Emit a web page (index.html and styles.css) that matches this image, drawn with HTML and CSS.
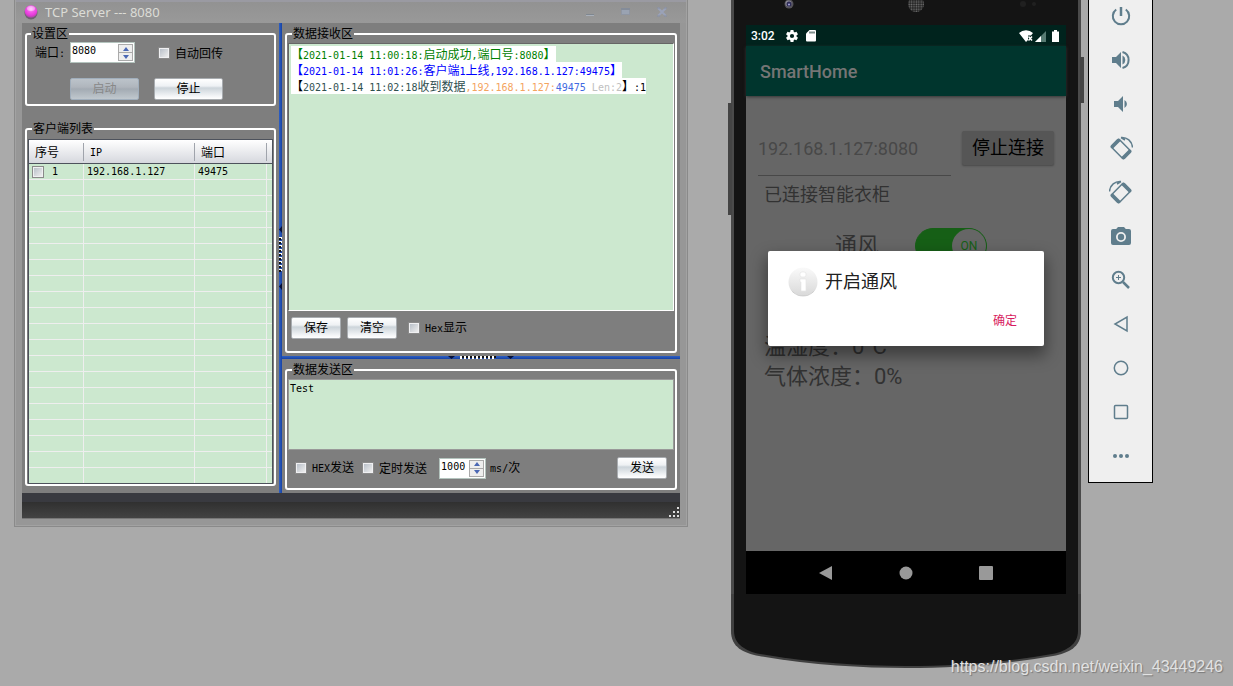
FILE: index.html
```html
<!DOCTYPE html>
<html lang="zh-CN">
<head>
<meta charset="utf-8">
<title>TCP Server --- 8080</title>
<link rel="stylesheet" href="styles.css">
</head>
<body>
<main class="desktop">
  <section class="window">
    <header class="titlebar">
      <svg class="orb" width="14" height="16" viewBox="0 0 14 16"><defs><radialGradient id="orb" cx=".5" cy=".3" r=".7"><stop offset="0" stop-color="#ffb8f8"/><stop offset=".35" stop-color="#f45bea"/><stop offset=".7" stop-color="#e83bdc"/><stop offset="1" stop-color="#a34b9e"/></radialGradient></defs><ellipse cx="7" cy="9" rx="6.500" ry="6.500" fill="#6d6070"/><circle cx="7" cy="7.500" r="6.200" fill="url(#orb)"/><ellipse cx="7" cy="4.500" rx="4" ry="2.500" fill="#ffe4fd" opacity=".5"/></svg>
      <h1 class="title">TCP Server --- 8080</h1>
      <div class="winbtns">
        <button type="button" aria-label="最小化"><svg width="12" height="12"><path d="M2 8.500h8" stroke="#7f8790" stroke-width="1"/><path d="M2 9.500h8" stroke="#a9b0ba"/></svg></button>
        <button type="button" aria-label="最大化"><svg width="12" height="12"><rect x="1.500" y="2.500" width="8" height="6" fill="#9aa3b2" stroke="#8f96a3"/><path d="M1 3h9" stroke="#848c99" stroke-width="2"/></svg></button>
        <button type="button" aria-label="关闭"><svg width="12" height="12"><path d="M2 2l8 8M10 2l-8 8" stroke="#9aa2b8" stroke-width="2"/><path d="M1 2h3M8 2h3M1 10h3M8 10h3" stroke="#868ea2"/></svg></button>
      </div>
    </header>

    <div class="client">
      <div class="left">
        <fieldset class="group settings">
          <legend>设置区</legend>
          <div class="row">
            <label for="port">端口<span class="m">:</span></label>
            <span class="spin"><input id="port" class="m" value="8080">
              <span class="arrows"><button type="button" aria-label="增加"><svg width="6" height="4"><path d="M0 4L3 0l3 4z"/></svg></button><button type="button" aria-label="减少"><svg width="6" height="4"><path d="M0 0l3 4 3-4z"/></svg></button></span></span>
            <label class="check auto"><input type="checkbox">自动回传</label>
          </div>
          <div class="row actions">
            <button class="btn wide" type="button" disabled>启动</button>
            <button class="btn wide" type="button">停止</button>
          </div>
        </fieldset>
        <fieldset class="group clients">
          <legend>客户端列表</legend>
          <table class="grid">
            <colgroup><col class="c1"><col class="c2"><col class="c3"><col class="c4"></colgroup>
            <thead><tr><th>序号</th><th><span class="m">IP</span></th><th>端口</th><th></th></tr></thead>
            <tbody class="m">
              <tr><td><label class="num"><input type="checkbox">1</label></td><td>192.168.1.127</td><td>49475</td><td></td></tr>
              <tr><td></td><td></td><td></td><td></td></tr><tr><td></td><td></td><td></td><td></td></tr>
              <tr><td></td><td></td><td></td><td></td></tr><tr><td></td><td></td><td></td><td></td></tr>
              <tr><td></td><td></td><td></td><td></td></tr><tr><td></td><td></td><td></td><td></td></tr>
              <tr><td></td><td></td><td></td><td></td></tr><tr><td></td><td></td><td></td><td></td></tr>
              <tr><td></td><td></td><td></td><td></td></tr><tr><td></td><td></td><td></td><td></td></tr>
              <tr><td></td><td></td><td></td><td></td></tr><tr><td></td><td></td><td></td><td></td></tr>
              <tr><td></td><td></td><td></td><td></td></tr><tr><td></td><td></td><td></td><td></td></tr>
              <tr><td></td><td></td><td></td><td></td></tr><tr><td></td><td></td><td></td><td></td></tr>
              <tr><td></td><td></td><td></td><td></td></tr><tr><td></td><td></td><td></td><td></td></tr>
              <tr><td></td><td></td><td></td><td></td></tr>
            </tbody>
          </table>
        </fieldset>
      </div>

      <div class="vsplit"><svg width="3" height="64" viewBox="0 0 3 64"><path d="M3 0v7L0 3.500zM3 57v7L0 60.500z" fill="#05103a"/><path d="M1.500 11v36" stroke="#fff" stroke-width="3" stroke-dasharray="2 2"/><path d="M1 12v36" stroke="#111" stroke-width="2" stroke-dasharray="2 2"/></svg></div>

      <div class="right">
        <fieldset class="group receive">
          <legend>数据接收区</legend>
          <div class="log">
            <p class="ok">【<span class="m">2021-01-14 11:00:18:</span>启动成功<span class="m">,</span>端口号<span class="m">:8080</span>】</p>
            <p class="on">【<span class="m">2021-01-14 11:01:26:</span>客户端<span class="m">1</span>上线<span class="m">,192.168.1.127:49475</span>】</p>
            <p>【<span class="slate"><span class="m">2021-01-14 11:02:18</span>收到数据</span><span class="m"><span class="ip">,192.168.1.127:</span><span class="pt">49475</span><span class="len"> Len:2</span></span>】<span class="m">:1</span></p>
          </div>
          <div class="row tools">
            <button class="btn" type="button">保存</button>
            <button class="btn" type="button">清空</button>
            <label class="check"><input type="checkbox"><span><span class="m">Hex</span>显示</span></label>
          </div>
        </fieldset>
        <div class="hsplit"><svg width="66" height="3" viewBox="0 0 66 3"><path d="M0 0h7L3.500 3zM59 0h7L62.500 3z" fill="#05103a"/><path d="M12 1.500h36" stroke="#fff" stroke-width="3" stroke-dasharray="2 2"/><path d="M14 1h36" stroke="#111" stroke-width="2" stroke-dasharray="2 2"/></svg></div>
        <fieldset class="group send">
          <legend>数据发送区</legend>
          <textarea class="m" aria-label="数据发送区">Test</textarea>
          <div class="row tools2">
            <label class="check"><input type="checkbox"><span><span class="m">HEX</span>发送</span></label>
            <label class="check"><input type="checkbox">定时发送</label>
            <span class="spin small"><input id="ms" class="m" value="1000">
              <span class="arrows"><button type="button" aria-label="增加"><svg width="6" height="4"><path d="M0 4L3 0l3 4z"/></svg></button><button type="button" aria-label="减少"><svg width="6" height="4"><path d="M0 0l3 4 3-4z"/></svg></button></span></span>
            <label for="ms"><span class="m">ms/</span>次</label>
            <button class="btn submit" type="button">发送</button>
          </div>
        </fieldset>
      </div>
    </div>
    <footer class="statusbar"><svg width="11" height="11" viewBox="0 0 11 11" fill="#ddd"><path d="M8 0h2v2H8zM4 4h2v2H4zM8 4h2v2H8zM0 8h2v2H0zM4 8h2v2H4zM8 8h2v2H8z"/></svg></footer>
  </section>

  <section class="phone">
    <i class="key key-l"></i><i class="key key-r"></i>
    <div class="bezel">
      <div class="forehead">
        <svg class="cam" width="10" height="10" viewBox="0 0 10 10"><circle cx="5" cy="4" r="4.500" fill="#55535a"/><circle cx="4.500" cy="3.500" r="3" fill="#8d8b96"/><circle cx="5" cy="4" r="2.500" fill="#2c2a55"/><circle cx="5" cy="4.500" r="1" fill="#a9a9dc"/></svg>
        <svg class="speaker" width="16" height="16" viewBox="0 0 16 16"><defs><pattern id="mesh" width="2.400" height="2.400" patternUnits="userSpaceOnUse"><circle cx="1.200" cy="1.200" r=".8" fill="#777"/></pattern></defs><circle cx="8" cy="8" r="8" fill="#222"/><circle cx="8" cy="8" r="8" fill="url(#mesh)"/></svg>
        <svg class="sensor" width="18" height="8"><circle cx="4" cy="4" r="3" fill="#202020"/><circle cx="15" cy="4" r="2" fill="#202020"/></svg>
      </div>
      <div class="screen">
        <div class="status">
          <span class="clock">3:02</span>
          <svg width="12" height="12" viewBox="2 2 20 20" fill="#fff"><path d="M19.430 12.980c.04-.32.070-.64.070-.98s-.03-.66-.07-.98l2.110-1.650c.19-.15.240-.42.120-.64l-2-3.460c-.12-.22-.39-.3-.61-.22l-2.490 1c-.52-.4-1.080-.73-1.690-.98l-.38-2.650A.49.490 0 0 0 14 2h-4c-.25 0-.46.180-.49.420l-.38 2.650c-.61.250-1.170.59-1.690.98l-2.490-1c-.23-.09-.49 0-.61.220l-2 3.460c-.13.220-.07.490.12.640l2.110 1.650c-.04.320-.07.650-.07.980s.03.660.07.980l-2.110 1.650c-.19.150-.24.420-.12.640l2 3.460c.12.220.39.300.61.220l2.490-1c.52.400 1.080.730 1.690.980l.38 2.650c.03.240.24.420.49.420h4c.25 0 .46-.18.490-.42l.38-2.650c.61-.25 1.170-.59 1.690-.98l2.490 1c.23.090.49 0 .61-.22l2-3.460c.12-.22.070-.49-.12-.64zM12 15.500a3.500 3.500 0 1 1 0-7 3.500 3.500 0 0 1 0 7z"/></svg>
          <svg class="sd" width="10" height="12" viewBox="0 0 10 12"><path d="M3.500 0H9a1 1 0 0 1 1 1v9.500a1 1 0 0 1-1 1H1a1 1 0 0 1-1-1V3.500z" fill="#fff"/><path d="M4 1.500v2M6 1.500v2M8 1.500v2" stroke="#00231d"/></svg>
          <svg class="sig" width="42" height="12" viewBox="0 0 42 12"><path d="M0 3a10.500 10.500 0 0 1 14 0l-2 2.500H9V10l-2 2z" fill="#fff"/><path d="M9.500 6.500l3.500 4M13 6.500l-3.500 4" stroke="#fff" stroke-width="1.500"/><path d="M16 12L27 1v11z" fill="#577a72"/><path d="M16 12l6-6v6z" fill="#fff"/><path d="M33 1.500h2V0h3v1.500h2V12h-7z" fill="#fff"/></svg>
        </div>
        <div class="appbar">SmartHome</div>
        <div class="app">
          <div class="connect">
            <input class="addr" aria-label="地址" placeholder="192.168.1.127:8080">
            <button class="stop" type="button">停止连接</button>
          </div>
          <p class="state">已连接智能衣柜</p>
          <label class="fan"><span>通风</span><span class="switch"><input type="checkbox" role="switch" checked><span class="knob">ON</span></span></label>
          <p class="read first">温湿度：0°C</p>
          <p class="read">气体浓度：0%</p>
        </div>
        <nav class="nav">
          <button type="button" aria-label="返回"><svg width="14" height="16"><path d="M0 8L13 1v14z"/></svg></button>
          <button type="button" aria-label="主页"><svg width="14" height="16"><circle cx="7" cy="8" r="6.500"/></svg></button>
          <button type="button" aria-label="概览"><svg width="14" height="16"><rect y="1" width="14" height="14" rx="1"/></svg></button>
        </nav>
        <div class="dialog" role="dialog" aria-label="开启通风">
          <div class="dhead"><svg width="30" height="30" viewBox="0 0 30 30"><defs><linearGradient id="info" x1="0" y1="0" x2="0" y2="1"><stop offset="0" stop-color="#fafafa"/><stop offset="1" stop-color="#d8d8d8"/></linearGradient></defs><circle cx="15" cy="15" r="14.500" fill="url(#info)"/><path d="M2 21a14.500 14.500 0 0 0 26 0a14.700 14.700 0 0 1-26 0z" fill="#b8b8b8"/><rect x="12" y="5" width="6" height="5" rx="2" fill="#fff" stroke="#e2e2e2" stroke-width=".6"/><path d="M12 12h6v12h-5V15h-1z" fill="#fff" stroke="#e2e2e2" stroke-width=".6"/></svg>开启通风</div>
          <button class="confirm" type="button">确定</button>
        </div>
      </div>
    </div>
    <svg class="chin" viewBox="0 0 350 74" preserveAspectRatio="none"><path d="M0 0V37C0 53 12 59 28 62C80 71 130 74 175 74C220 74 270 71 322 62C338 59 350 53 350 37V0z" fill="#404040"/><path d="M3 0V37C3 50 14 57 29 60C80 69 130 72 175 72C220 72 270 69 321 60C336 57 347 50 347 37V0z" fill="#141414"/></svg>
  </section>

  <aside class="toolbar">
    <button type="button" aria-label="电源"><svg viewBox="0 0 24 24"><path d="M12 3v9" class="s3"/><path d="M7.200 5.500a8.200 8.200 0 1 0 9.600 0" class="s2"/></svg></button>
    <button type="button" aria-label="音量加"><svg viewBox="0 0 24 24"><path d="M3 9v6h4l5 5V4L7 9zM13.500 7.500v9a5 5 0 0 0 0-9z" class="f"/><path d="M13.500 4a8.300 8.300 0 0 1 0 16" class="s2"/></svg></button>
    <button type="button" aria-label="音量减"><svg viewBox="0 0 24 24"><path d="M5 9v6h4l5 5V4L9 9zM15.500 8v8a4.500 4.500 0 0 0 0-8z" class="f"/></svg></button>
    <button type="button" aria-label="向左旋转"><svg viewBox="0 0 24 24"><g transform="rotate(-45 12 13)"><rect x="6.500" y="4" width="11" height="18" rx="1.500" class="s15"/><path d="M6 4h12v3H6zM6 19h12v3H6z" class="f"/></g><path d="M12 1.500c6-.5 11 3.500 11.500 10M12 1.500l4 2.500" class="s15"/></svg></button>
    <button type="button" aria-label="向右旋转"><svg viewBox="0 0 24 24"><g transform="rotate(45 12 13)"><rect x="6.500" y="4" width="11" height="18" rx="1.500" class="s15"/><path d="M6 4h12v3H6zM6 19h12v3H6z" class="f"/></g><path d="M12 1.500C6 1 1 5 .5 11.500M12 1.500L8 4" class="s15"/></svg></button>
    <button type="button" aria-label="截图"><svg viewBox="0 0 24 24"><path fill-rule="evenodd" d="M9 3L7.200 5H4a2 2 0 0 0-2 2v12a2 2 0 0 0 2 2h16a2 2 0 0 0 2-2V7a2 2 0 0 0-2-2h-3.200L15 3zm3 15a5 5 0 1 1 0-10 5 5 0 0 1 0 10z" class="f"/><circle cx="12" cy="13" r="3.200" class="f"/></svg></button>
    <button type="button" aria-label="缩放"><svg viewBox="0 0 24 24"><circle cx="9.500" cy="9.500" r="5.700" class="s2"/><path d="M14 14l6 6" class="s3"/><path d="M9.500 7v5M7 9.500h5" class="s1"/></svg></button>
    <button type="button" aria-label="后退"><svg viewBox="0 0 24 24"><path d="M18 5v14L6 12z" class="s15"/></svg></button>
    <button type="button" aria-label="主屏幕"><svg viewBox="0 0 24 24"><circle cx="12" cy="12" r="6.700" class="s15"/></svg></button>
    <button type="button" aria-label="最近任务"><svg viewBox="0 0 24 24"><rect x="5.500" y="5.500" width="13" height="13" rx="1" class="s15"/></svg></button>
    <button type="button" aria-label="更多"><svg viewBox="0 0 24 24" class="f"><circle cx="6" cy="12" r="2"/><circle cx="12" cy="12" r="2"/><circle cx="18" cy="12" r="2"/></svg></button>
  </aside>
</main>
<div class="watermark">https://blog.csdn.net/weixin_43449246</div>
</body>
</html>
```
FILE: styles.css
```css
* { box-sizing: border-box; }
body { margin: 0; min-height: 100vh; background: #aaa; overflow: hidden; position: relative; color: #000; font: 12px/16px "Noto Sans CJK SC", sans-serif; }
button, input, textarea { font: inherit; color: inherit; margin: 0; padding: 0; border: 0; background: none; }
p { margin: 0; }
svg { display: block; flex: none; }
.m { font-family: "DejaVu Sans Mono", monospace; font-size: 10px; }

.desktop { display: grid; grid-template-columns: minmax(0, 1fr) 350px 72px; align-items: start; padding: 0 80px 0 14px; }

/* TCP server window */
.window { margin-right: 43px; padding: 0 7px 7px; background: #979797; border: 1px solid #8a8a8a; border-top: 0; box-shadow: inset 0 0 0 1px #a2a2a2; }
.titlebar { display: flex; align-items: center; gap: 7px; height: 23px; padding: 0 18px 0 8px; margin: 0 -6px; background: linear-gradient(#9a9aa2 0 2px, #929292 2px, #999); }
.title { margin: 0; flex: 1; font: 13px/16px "Noto Sans", sans-serif; color: #dcdcd6; }
.winbtns { display: flex; gap: 24px; }
.winbtns button { width: 12px; height: 12px; }
.client { display: grid; grid-template-columns: 257px 3px minmax(0, 1fr); background: #7e7e7e; }
.left, .right { display: flex; flex-direction: column; }
.left { padding: 3px 3px 5px; gap: 15px; }
.group { min-width: 0; margin: 0; border: 2px solid #fff; border-radius: 3px; padding: 0; }
.group legend { margin-left: 4px; padding: 0 1px; height: 16px; line-height: 13px; }
.row { display: flex; align-items: center; }

.settings { padding-bottom: 4px; }
.settings .row { margin-left: 8px; }
.settings label[for] { width: 35px; }
.spin { display: flex; width: 65px; height: 21px; padding: 1px; background: #fff; border: 1px solid #b4c4be; }
.spin input { flex: 1; min-width: 0; height: 14px; }
.spin .arrows { display: grid; gap: 1px; width: 15px; border: 1px solid #aaa; background: #aaa; }
.arrows button { display: grid; place-items: center; background: #eee; min-height: 0; }
.arrows svg { fill: #4a68b4; }
.check { display: flex; align-items: center; gap: 5px; }
.auto { margin-left: 23px; }
input[type="checkbox"] { appearance: none; flex: none; width: 12px; height: 12px; border: 2px solid #f0f0f2; outline: 1px solid #8a8a8a; outline-offset: -1px; background: linear-gradient(135deg, #b9c0c9, #eee); }
.settings .actions { gap: 15px; margin: 15px 0 0 43px; }
.btn { height: 22px; width: 50px; line-height: 18px; padding-bottom: 2px; border: 1px solid #a8acb0; border-radius: 2px; background: linear-gradient(#fff, #eef1f4 35%, #ccd4da 45%, #f3f5f7 85%, #fff); }
.btn.wide { width: 69px; }
.btn:disabled { color: #888; background: linear-gradient(#bcc3ca, #b0b6bd 40%, #a3abb3 50%, #c0c8ce); border-color: #a0aebc; }

.clients { padding: 0 1px; }
.grid { width: 100%; margin-top: 2px; table-layout: fixed; border-collapse: separate; border-spacing: 0; border: 1px solid #4d525c; background: #cce8cf; }
.c1 { width: 55px; } .c2 { width: 111px; } .c3 { width: 72px; }
.grid th { height: 24px; padding: 0 0 0 6px; text-align: left; font-weight: 400; background: linear-gradient(90deg, transparent calc(100% - 1px), #a0a4ac 0) 0 3px / 100% 18px no-repeat, linear-gradient(#fff, #d6d8de); border-bottom: 1px solid #4d525c; }
.grid th:last-child { background: linear-gradient(#fff, #d6d8de); }
.grid td { height: 16px; padding: 0 3px; line-height: 15px; border-right: 1px solid #eee; border-bottom: 1px solid #eee; }
.grid td:last-child { border-right: 0; }
.grid tr:last-child td { border-bottom: 0; height: 15px; }
.num { display: flex; align-items: center; gap: 8px; height: 15px; }

.vsplit { display: grid; place-items: center; background: linear-gradient(90deg, #2d5fc4, #1743a4); }
.hsplit { display: grid; place-items: center; background: linear-gradient(#2d5fc4, #1743a4); }
.right { padding: 3px 0; }
.right .group { margin: 0 3px; }
.receive { padding: 0 1px 12px; }
.log { min-height: 268px; margin-top: 1px; padding: 2px; background: #cce8cf; border: 1px solid #fff; border-top-color: #666; border-left-color: #666; }
.log p { width: max-content; height: 16px; line-height: 16px; background: #fff; }
.ok { color: #008000; } .on { color: #00f; } .slate { color: #2f4f4f; }
.ip { color: #f4a460; } .pt { color: #4169e1; } .len { color: #c0c0c0; white-space: pre; }
.tools { gap: 6px; margin: 6px 0 0 3px; }
.tools .check { margin-left: 5px; }
.hsplit { margin: 3px 0; }
.send { padding: 0 1px 9px; }
.send textarea { display: block; width: 100%; height: 71px; margin-top: 1px; padding: 2px 1px; resize: none; overflow: hidden; line-height: 14px; background: #cce8cf; border: 1px solid #999; }
.tools2 { gap: 8px; margin: 7px 7px 0; }
.small { width: 47px; margin-left: 4px; }
.small + label { margin-left: -4px; }
.submit { margin-left: auto; }
.statusbar { display: flex; justify-content: flex-end; align-items: flex-end; height: 26px; background: linear-gradient(#393a40 0 9px, #303030 9px, #434343); border-bottom: 1px solid #777; }

/* Android emulator */
.phone { position: relative; }
.bezel { padding: 0 12px; background: #141414; border: solid #4a4a4a; border-width: 0 3px; }
.forehead { display: flex; align-items: flex-start; justify-content: space-between; height: 25px; padding: 0 29px 0 38px; }
.speaker { margin-top: -4px; margin-left: 18px; }
.key { position: absolute; width: 4px; background: #444; }
.key-l { left: -3px; top: 103px; height: 112px; }
.key-r { right: -3px; top: 57px; height: 46px; }
.chin { width: 100%; height: 74px; }
.screen { position: relative; font-family: Roboto, "Noto Sans CJK SC", sans-serif; color: #323232; background: #666; }
.status { display: flex; align-items: center; height: 21px; padding: 0 5px; color: #fff; background: #00231d; }
.clock { width: 35px; font-weight: 500; }
.sd { margin-left: 8px; }
.sig { margin-left: auto; }
.appbar { height: 50px; padding: 0 14px; font-size: 18px; line-height: 52px; font-weight: 500; color: #757575; background: #00352d; box-shadow: 0 1px 3px #333; position: relative; }
.app { min-height: 455px; padding: 33px 12px 0; }
.connect { display: flex; gap: 11px; }
.addr { flex: 1; min-width: 0; height: 47px; padding-bottom: 7px; font-size: 18px; border-bottom: 1px solid #484848; }
.addr::placeholder { color: #484848; opacity: 1; }
.stop { width: 92px; height: 34px; margin-top: 2px; font-size: 18px; line-height: 28px; color: #000; background: #565656; border-radius: 2px; box-shadow: 0 1px 2px #484848; }
.state { margin: 6px; font-size: 18px; line-height: 26px; }
.fan { display: flex; align-items: center; gap: 36px; height: 38px; margin: 19px 0 0 77px; font-size: 22px; }
.switch { position: relative; width: 72px; height: 36px; }
.switch input { width: 72px; height: 36px; border: 1px solid #165f16; outline: 0; border-radius: 18px; background: #165f16; display: block; }
.knob { position: absolute; top: 1px; right: 1px; width: 34px; height: 34px; border-radius: 50%; background: #666; color: #165f16; font-size: 12px; line-height: 34px; text-align: center; }
.read { margin-left: 6px; font-size: 22px; line-height: 30px; }
.first { margin-top: 67px; }
.nav { display: flex; justify-content: center; gap: 66px; height: 43px; align-items: center; background: #000; }
.nav button { width: 14px; height: 16px; }
.nav svg { fill: #999; }
.dialog { position: absolute; left: 22px; right: 22px; top: 226px; padding: 15px 20px 12px; background: #fff; border-radius: 2px; box-shadow: 0 8px 16px 2px rgba(0,0,0,.4); display: flex; flex-direction: column; }
.dhead { display: flex; align-items: center; gap: 7px; height: 32px; font-size: 18px; color: #212121; }
.confirm { align-self: flex-end; margin: 10px 0 0; height: 26px; padding: 0 7px; color: #d81b60; }

.toolbar { display: flex; flex-direction: column; margin: -7px 0 0 7px; padding-bottom: 4px; background: #efefef; border: 1px solid #000; }
.toolbar button { display: grid; place-items: center; height: 44px; }
.toolbar svg { width: 24px; height: 24px; fill: none; stroke: #5f7d8c; stroke-width: 0; }
.toolbar .f { fill: #5f7d8c; stroke: none; }
.toolbar .s1 { stroke-width: 1; } .toolbar .s15 { stroke-width: 1.5; } .toolbar .s2 { stroke-width: 2; } .toolbar .s3 { stroke-width: 2.5; }
.watermark { position: absolute; right: 10px; bottom: 9px; font: 16px/20px "Liberation Sans", sans-serif; color: #e2e2e2; text-shadow: 1px 1px 1px #777; }
```
